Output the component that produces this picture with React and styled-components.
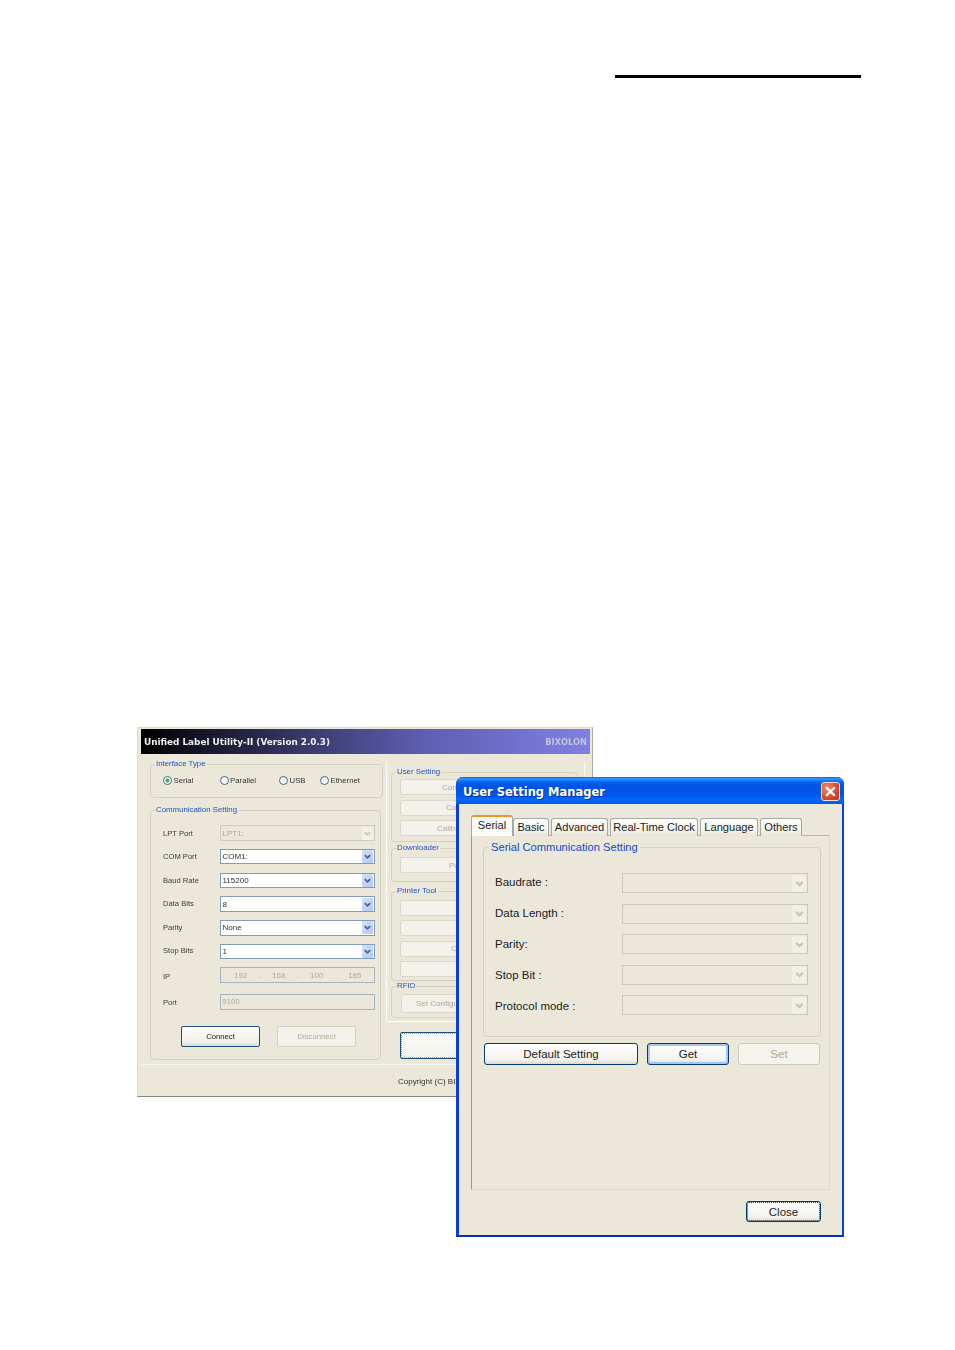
import React from "react";
import styled, { createGlobalStyle } from "styled-components";

const Global = createGlobalStyle`
  html, body { margin: 0; padding: 0; background: #fff; }
  * { box-sizing: border-box; }
`;

const Page = styled.div`
  width: 955px;
  height: 1350px;
  padding-top: 75px;
  overflow: hidden;
  font-family: "Liberation Sans", Arial, sans-serif;
`;
const TopRule = styled.div`
  width: 246px;
  height: 3px;
  margin-left: 615px;
  background: #000;
`;
const Desktop = styled.div`
  position: relative;
  height: 1272px;
`;

/* ---------- back window ---------- */
const BackWindow = styled.section`
  position: absolute;
  left: 137px;
  top: 649px;
  width: 456px;
  height: 370px;
  padding: 1px 2px 0 3px;
  display: flex;
  flex-direction: column;
  background: #ebe8d9;
  border: 1px solid #dedcce;
  border-bottom-color: #85857a;
  border-right-color: #a9a89b;
  font-size: 8px;
  color: #333;
  overflow: hidden;
  filter: blur(0.25px);
`;
const BackTitle = styled.header`
  height: 25px;
  flex: none;
  padding: 1px 3px 0;
  display: flex;
  align-items: center;
  justify-content: space-between;
  background: linear-gradient(90deg, #000 0%, #3b3b70 38%, #5d5db0 62%, #8080e4 100%);
  font-family: "DejaVu Sans", sans-serif;
  font-weight: 700;
  font-size: 8.85px;
  color: #f1f1f1;
`;
const Brand = styled.span`
  color: #c3c3dc;
  font-size: 8.2px;
  letter-spacing: 0.1px;
`;
const BackBody = styled.div`
  height: 311px;
  flex: none;
  padding: 5px 0 0 9px;
  display: flex;
  gap: 3px;
  border-bottom: 1px solid #f7f6ee;
`;
const LeftCol = styled.div`
  width: 233px;
  display: flex;
  flex-direction: column;
  gap: 7px;
`;
const RightCol = styled.div`
  width: 199px;
  margin-top: 3px;
`;
const Group = styled.fieldset`
  margin: ${(p) => p.$mt || 0}px 0 0 0;
  padding: 0;
  min-width: 0;
  width: ${(p) => (p.$w ? `${p.$w}px` : "auto")};
  height: ${(p) => p.$h}px;
  border: 1px solid #d2d0bf;
  border-radius: 4px;
`;
const Legend = styled.legend`
  padding: 0 1px;
  margin-left: 4px;
  height: 10px;
  line-height: 10px;
  font-size: 7.85px;
  color: #2052c8;
`;
const RadioRow = styled.div`
  display: grid;
  grid-template-columns: 56.5px 59.5px 41px auto;
  padding: 6px 0 0 12px;
`;
const RadioItem = styled.label`
  display: flex;
  align-items: center;
  gap: 1.5px;
  height: 10px;
  font-size: 7.8px;
`;
const RadioDot = styled.span`
  width: 9px;
  height: 9px;
  flex: none;
  border-radius: 50%;
  border: 1px solid #48698a;
  background: ${(p) =>
    p.$on ? "radial-gradient(circle, #3fb54a 0 1.8px, #fff 2.4px)" : "#f6f6f2"};
`;
const FormGrid = styled.div`
  display: flex;
  flex-direction: column;
  gap: 7.7px;
  padding: 10px 0 0 12px;
`;
const FormRow = styled.div`
  display: grid;
  grid-template-columns: 57px 155px;
  align-items: center;
  height: 16px;
  margin-top: ${(p) => p.$mt || 0}px;
`;
const shiftPadding = (s) =>
  `padding-top: ${Math.max(s * 2, 0)}px; padding-bottom: ${Math.max(-s * 2, 0)}px;`;
const RowLabel = styled.span`
  font-size: 7.6px;
  color: #3c3c3c;
  ${(p) => shiftPadding(p.$shift || 0)}
`;
const SmallSelect = styled.div`
  height: 15.5px;
  padding: 0 1.5px 0 1.5px;
  display: flex;
  align-items: center;
  justify-content: space-between;
  border: 1px solid ${(p) => (p.$off ? "#cecdbd" : "#7f9db9")};
  background: ${(p) => (p.$off ? "#ebe8d9" : "#fff")};
  color: ${(p) => (p.$off ? "#aca899" : "#333")};
  font-size: 8px;
`;
const Arrow = styled.span`
  flex: none;
  display: flex;
  align-items: center;
  justify-content: center;
  width: ${(p) => p.$w}px;
  height: ${(p) => p.$h}px;
  background: ${(p) => (p.$off ? "#f1efe6" : "linear-gradient(135deg, #d5e0fb, #b4c8f6)")};
  border-radius: 1px;
  color: ${(p) => (p.$off ? "#c9c7b9" : "#50648f")};
`;
const Chevron = ({ size }) => (
  <svg width={size} height={size} viewBox="0 0 10 10" fill="none" stroke="currentColor" strokeWidth="2">
    <path d="M2 3.5 L5 6.5 L8 3.5" />
  </svg>
);
const Field = styled.div`
  height: 16px;
  padding-left: ${(p) => p.$inset || 1}px;
  display: flex;
  align-items: center;
  border: 1px solid #a3b3bf;
  background: #ebe8d9;
  color: #aca899;
  font-size: 8px;
`;
const Octet = styled.span`
  width: 38px;
  display: flex;
  flex: none;
`;
const OctetNum = styled.span`
  width: 14px;
`;
const OctetDot = styled.span`
  margin-left: 11px;
`;
const ButtonRow = styled.div`
  display: flex;
  gap: ${(p) => p.$gap || 0}px;
  margin: ${(p) => p.$m || 0};
`;
const MiniButton = styled.div`
  width: 79px;
  height: 21px;
  padding-top: 1px;
  display: flex;
  align-items: center;
  justify-content: center;
  border-radius: 2px;
  font-size: 7.7px;
  border: 1px solid ${(p) => (p.$off ? "#d2d0bf" : "#1d4f7c")};
  color: ${(p) => (p.$off ? "#aca899" : "#222")};
  background: ${(p) => (p.$off ? "#f3f2ea" : "linear-gradient(#fdfdfb, #f0efe8 80%, #dedbcf)")};
`;
const SidePanel = styled.div`
  height: 260px;
  padding: 5px 6px 0 4px;
  border-left: 1px solid #fbfaf4;
  border-right: 1px solid #fbfaf4;
  border-bottom: 1px solid #fff;
`;
const SideStack = styled.div`
  display: flex;
  flex-direction: column;
  gap: ${(p) => p.$gap || 0}px;
  padding: ${(p) => p.$top || 0}px 0 0 ${(p) => p.$left || 8}px;
`;
const SideButton = styled.div`
  width: 130px;
  height: ${(p) => p.$h || 16}px;
  padding-left: ${(p) => p.$inset || 0}px;
  display: flex;
  align-items: center;
  white-space: nowrap;
  background: #f3f2ea;
  border: 1px solid #dad8c9;
  border-radius: 2px;
  color: #aca899;
  font-size: 8px;
`;
const BigButton = styled.div`
  width: 130px;
  height: 27px;
  margin: 10px 0 0 14px;
  border: 1px solid #1d4f7c;
  border-radius: 2px;
  outline: 1px dotted #8da3b8;
  outline-offset: -2px;
  background: linear-gradient(#fbfbf8, #f2f1ea);
`;
const BackFooter = styled.footer`
  flex: 1;
  padding: 2px 0 0 257px;
  display: flex;
  align-items: center;
  font-size: 8px;
  color: #333;
  white-space: nowrap;
`;

/* ---------- front window ---------- */
const FrontWindow = styled.section`
  position: absolute;
  left: 456px;
  top: 699px;
  width: 388px;
  height: 460px;
  display: flex;
  flex-direction: column;
  background: #0a3ee0;
  border-radius: 7px 7px 0 0;
  border-bottom: 2px solid #0531b8;
  padding: 0 2px 0 3px;
  overflow: hidden;
  font-size: 11.5px;
  color: #1c1c1c;
`;
const FrontTitle = styled.header`
  height: 27px;
  flex: none;
  margin: 0 -2px 0 -3px;
  padding: 2px 4px 0 7px;
  display: flex;
  align-items: center;
  justify-content: space-between;
  background: linear-gradient(
    #0058ee 0%,
    #3593ff 6%,
    #1a80ff 12%,
    #0262ee 20%,
    #0054e3 32%,
    #0055eb 60%,
    #005bf5 72%,
    #0469fa 84%,
    #0058e6 100%
  );
  font-family: "DejaVu Sans", sans-serif;
  font-weight: 700;
  font-size: 11.5px;
  color: #fff;
  text-shadow: 1px 1px 0 #0a2f9c;
`;
const CloseBox = styled.span`
  width: 19px;
  height: 19px;
  display: flex;
  align-items: center;
  justify-content: center;
  border: 1px solid #f4ddd4;
  border-radius: 3px;
  background: radial-gradient(circle at 30% 30%, #ef8a68, #d9492a 60%, #bf3418);
`;
const Client = styled.div`
  flex: 1;
  padding: 11px 12px 0 12px;
  background: #ebe8d9;
`;
const TabStrip = styled.div`
  display: flex;
  align-items: flex-end;
  gap: 2px;
  height: 21px;
`;
const Tab = styled.div`
  width: ${(p) => p.$w}px;
  height: ${(p) => (p.$on ? 21 : 18)}px;
  padding-bottom: ${(p) => (p.$on ? 3 : 1)}px;
  display: flex;
  align-items: center;
  justify-content: center;
  white-space: nowrap;
  font-size: 11.1px;
  margin-right: ${(p) => (p.$on ? -2 : 0)}px;
  border: 1px solid #a2aaa9;
  border-bottom: none;
  border-radius: 3px 3px 0 0;
  background: ${(p) => (p.$on ? "#fbfbf8" : "linear-gradient(#fdfdfb, #f3f2ea 70%, #e6e3d6)")};
  border-top: ${(p) => (p.$on ? "2px solid #e8962e" : "1px solid #a2aaa9")};
  position: relative;
  z-index: ${(p) => (p.$on ? 1 : 0)};
`;
const TabPanel = styled.div`
  width: 359px;
  height: 355px;
  margin-top: -1px;
  padding: 4px 0 0 11px;
  border: 1px solid #dcdaca;
  border-top-color: #b9b9aa;
  border-left-color: #9a9a8e;
`;
const FrontLegend = styled.legend`
  margin-left: 5px;
  padding: 0 2px;
  height: 14px;
  line-height: 14px;
  font-size: 11.15px;
  color: #0d4ccf;
`;
const SettingList = styled.div`
  display: flex;
  flex-direction: column;
  gap: 10.5px;
  padding: 19px 0 0 11px;
`;
const SettingRow = styled.div`
  display: grid;
  grid-template-columns: 127px 186px;
  align-items: center;
  height: 20px;
`;
const SettingLabel = styled.span`
  ${(p) => shiftPadding(p.$shift || 0)}
`;
const BigSelect = styled.div`
  height: 20px;
  padding-right: 1px;
  display: flex;
  align-items: center;
  justify-content: flex-end;
  border: 1px solid #cac8b9;
  background: #ebe8d9;
`;
const ActionButton = styled.div`
  width: ${(p) => p.$w}px;
  height: ${(p) => p.$h || 22}px;
  display: flex;
  align-items: center;
  justify-content: center;
  border-radius: 3px;
  border: 1px solid ${(p) => (p.$off ? "#cbc9ba" : "#003c74")};
  color: ${(p) => (p.$off ? "#aca899" : "#1c1c1c")};
  background: ${(p) => (p.$off ? "#f4f3ec" : "linear-gradient(#fff, #f3f2ec 80%, #dcd8cc)")};
  box-shadow: ${(p) => (p.$glow ? "inset 0 0 0 2px #a9c4f0" : "none")};
  outline: ${(p) => (p.$focus ? "1px dotted #333" : "none")};
  outline-offset: -2px;
`;
const ClientFooter = styled.div`
  display: flex;
  justify-content: flex-end;
  padding: 11px 9px 0 0;
`;

const comm = [
  ["COM Port", "COM1:", 0],
  ["Baud Rate", "115200", 0],
  ["Data Bits", "8", -0.5],
  ["Parity", "None", 0],
  ["Stop Bits", "1", -1],
];
const settings = [
  ["Baudrate :", -1.5],
  ["Data Length :", -1],
  ["Parity:", 0],
  ["Stop Bit :", 0],
  ["Protocol mode :", 1],
];
const tabs = [
  ["Serial", 42],
  ["Basic", 36],
  ["Advanced", 57],
  ["Real-Time Clock", 88],
  ["Language", 58],
  ["Others", 42],
];

export default function App() {
  return (
    <Page>
      <Global />
      <TopRule />
      <Desktop>
        <BackWindow>
          <BackTitle>
            <span>Unified Label Utility-II (Version 2.0.3)</span>
            <Brand>BIXOLON</Brand>
          </BackTitle>
          <BackBody>
            <LeftCol>
              <Group $h={39}>
                <Legend>Interface Type</Legend>
                <RadioRow>
                  <RadioItem><RadioDot $on />Serial</RadioItem>
                  <RadioItem><RadioDot />Parallel</RadioItem>
                  <RadioItem><RadioDot />USB</RadioItem>
                  <RadioItem><RadioDot />Ethernet</RadioItem>
                </RadioRow>
              </Group>
              <Group $h={255} $w={231}>
                <Legend>Communication Setting</Legend>
                <FormGrid>
                  <FormRow>
                    <RowLabel>LPT Port</RowLabel>
                    <SmallSelect $off>
                      LPT1:
                      <Arrow $off $w={11} $h={13}><Chevron size={9} /></Arrow>
                    </SmallSelect>
                  </FormRow>
                  {comm.map(([label, value, shift]) => (
                    <FormRow key={label}>
                      <RowLabel $shift={shift}>{label}</RowLabel>
                      <SmallSelect>
                        {value}
                        <Arrow $w={11} $h={13}><Chevron size={9} /></Arrow>
                      </SmallSelect>
                    </FormRow>
                  ))}
                  <FormRow>
                    <RowLabel $shift={1.5}>IP</RowLabel>
                    <Field $inset={13}>
                      <Octet><OctetNum>192</OctetNum><OctetDot>.</OctetDot></Octet>
                      <Octet><OctetNum>168</OctetNum><OctetDot>.</OctetDot></Octet>
                      <Octet><OctetNum>100</OctetNum><OctetDot>.</OctetDot></Octet>
                      <Octet><OctetNum>185</OctetNum></Octet>
                    </Field>
                  </FormRow>
                  <FormRow $mt={3}>
                    <RowLabel $shift={1}>Port</RowLabel>
                    <Field>9100</Field>
                  </FormRow>
                </FormGrid>
                <ButtonRow $gap={17} $m="16px 0 0 30px">
                  <MiniButton>Connect</MiniButton>
                  <MiniButton $off>Disconnect</MiniButton>
                </ButtonRow>
              </Group>
            </LeftCol>
            <RightCol>
              <SidePanel>
                <Group $h={75}>
                  <Legend>User Setting</Legend>
                  <SideStack $top={2} $gap={4.5}>
                    <SideButton $inset={41}>Con</SideButton>
                    <SideButton $inset={45}>Co</SideButton>
                    <SideButton $inset={36}>Calibr</SideButton>
                  </SideStack>
                </Group>
                <Group $h={39} $mt={1}>
                  <Legend>Downloader</Legend>
                  <SideStack $top={4}>
                    <SideButton $inset={48}>Po</SideButton>
                  </SideStack>
                </Group>
                <Group $h={95} $mt={4}>
                  <Legend>Printer Tool</Legend>
                  <SideStack $top={4} $gap={4.3}>
                    <SideButton />
                    <SideButton />
                    <SideButton $inset={50}>C</SideButton>
                    <SideButton />
                  </SideStack>
                </Group>
                <Group $h={37}>
                  <Legend>RFID</Legend>
                  <SideStack $top={3} $left={9}>
                    <SideButton $h={19} $inset={14}>Set Configu</SideButton>
                  </SideStack>
                </Group>
              </SidePanel>
              <BigButton />
            </RightCol>
          </BackBody>
          <BackFooter>Copyright (C) BIXOLON</BackFooter>
        </BackWindow>

        <FrontWindow>
          <FrontTitle>
            <span>User Setting Manager</span>
            <CloseBox>
              <svg width="11" height="11" viewBox="0 0 11 11" stroke="#fff" strokeWidth="2.2" strokeLinecap="square">
                <path d="M2 2 L9 9 M9 2 L2 9" />
              </svg>
            </CloseBox>
          </FrontTitle>
          <Client>
            <TabStrip>
              {tabs.map(([name, w], i) => (
                <Tab key={name} $w={w} $on={i === 0}>{name}</Tab>
              ))}
            </TabStrip>
            <TabPanel>
              <Group $h={197} $w={338}>
                <FrontLegend>Serial Communication Setting</FrontLegend>
                <SettingList>
                  {settings.map(([s, shift]) => (
                    <SettingRow key={s}>
                      <SettingLabel $shift={shift}>{s}</SettingLabel>
                      <BigSelect>
                        <Arrow $off $w={14} $h={17}><Chevron size={11} /></Arrow>
                      </BigSelect>
                    </SettingRow>
                  ))}
                </SettingList>
              </Group>
              <ButtonRow $gap={9} $m="6px 0 0 1px">
                <ActionButton $w={154}>Default Setting</ActionButton>
                <ActionButton $w={82} $glow>Get</ActionButton>
                <ActionButton $w={82} $off>Set</ActionButton>
              </ButtonRow>
            </TabPanel>
            <ClientFooter>
              <ActionButton $w={75} $h={21} $focus>Close</ActionButton>
            </ClientFooter>
          </Client>
        </FrontWindow>
      </Desktop>
    </Page>
  );
}
